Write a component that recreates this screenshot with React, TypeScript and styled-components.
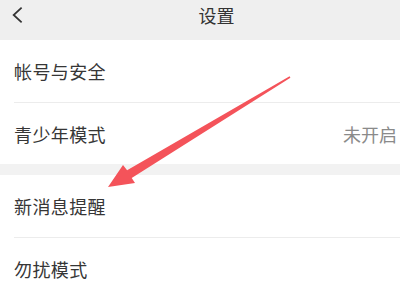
import React from "react";
import styled, { createGlobalStyle } from "styled-components";

const Global = createGlobalStyle`
  html, body { margin: 0; padding: 0; background: #ffffff; }
  body { font-family: "Noto Sans CJK SC", "Noto Sans", sans-serif; }
`;

const Page = styled.div`
  position: relative;
  width: 400px;
  height: 300px;
  overflow: hidden;
  background: #ffffff;
`;

const Header = styled.div`
  height: 40px;
  box-sizing: border-box;
  padding: 0 0 10px 12px;
  display: flex;
  align-items: center;
  background: #efefef;
`;

const Back = styled.div`
  width: 11px;
  height: 18px;
  display: flex;
  align-items: center;
`;

const Title = styled.div`
  flex: 1;
  text-align: center;
  padding-left: 10px;
  font-size: 18px;
  color: #333333;
  line-height: 20px;
`;

const Group = styled.div`
  background: #ffffff;
`;

const Gap = styled.div`
  height: 11px;
  background: #f2f2f2;
`;

const Row = styled.div<{ $last?: boolean; $h?: number }>`
  height: ${(p) => p.$h ?? 62}px;
  margin-left: 14px;
  padding-right: 3px;
  display: flex;
  align-items: center;
  justify-content: space-between;
  border-bottom: ${(p) => (p.$last ? "none" : "1px solid #ececec")};
`;

const Label = styled.span`
  font-size: 18px;
  color: #363636;
  letter-spacing: 0.4px;
`;

const Value = styled.span`
  font-size: 18px;
  color: #8a8a8a;
`;

const Overlay = styled.svg`
  position: absolute;
  left: 0;
  top: 0;
  pointer-events: none;
`;

export default function App() {
  return (
    <>
      <Global />
      <Page>
        <Header>
          <Back>
            <svg width="12" height="18" viewBox="0 0 12 18">
              <polyline points="10.5,1 1.8,9 10.5,17" fill="none" stroke="#333" strokeWidth="1.9" />
            </svg>
          </Back>
          <Title>设置</Title>
        </Header>
        <Group>
          <Row>
            <Label>帐号与安全</Label>
          </Row>
          <Row $last $h={61}>
            <Label>青少年模式</Label>
            <Value>未开启</Value>
          </Row>
        </Group>
        <Gap />
        <Group>
          <Row>
            <Label>新消息提醒</Label>
          </Row>
          <Row>
            <Label>勿扰模式</Label>
          </Row>
        </Group>
        <Overlay width="400" height="300" viewBox="0 0 400 300">
          <polygon
            points="290.4,77.7 289.6,76.3 127.1,170.3 123,165 108,187 135,183 131.7,177.9"
            fill="#f4535a"
          />
        </Overlay>
      </Page>
    </>
  );
}
